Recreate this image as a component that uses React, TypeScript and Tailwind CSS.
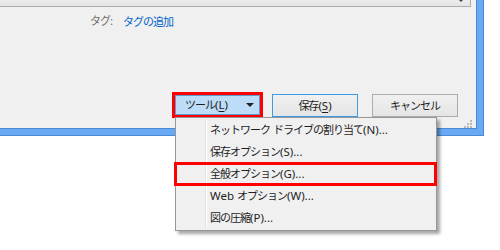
import type { ReactNode } from 'react';

const FONT = "font-['Noto_Sans_CJK_JP','Noto_Sans',sans-serif] text-[11px] tracking-[-1px]";

// menu items under the ツール button
const MENU_ITEMS = [
  'ネットワーク ドライブの割り当て(N)...',
  '保存オプション(S)...',
  '全般オプション(G)...',
  'Web オプション(W)...',
  '図の圧縮(P)...',
];

// CJK glyphs run narrow (Meiryo UI-ish); latin runs keep normal spacing
function Txt({ text }: { text: string }) {
  return (
    <>
      {text.split(/([\x20-\x7e]+)/).map((part, i) =>
        /^[\x20-\x7e]+$/.test(part) ? <Latin key={i}>{part}</Latin> : part,
      )}
    </>
  );
}

function Latin({ children }: { children: ReactNode }) {
  return <span className="font-['Noto_Sans',sans-serif] text-[11.5px] tracking-normal">{children}</span>;
}

function Btn({ children, blue }: { children: ReactNode; blue?: boolean }) {
  return (
    <div
      className={`mt-[2px] flex h-[23px] w-[86px] items-center justify-center border bg-gradient-to-b from-[#f0f0f0] to-[#e5e5e5] text-[#1e1e1e] ${
        blue ? 'border-[#3c9be8]' : 'border-[#acacac]'
      }`}
    >
      {children}
    </div>
  );
}

function Gripper() {
  return (
    <svg width="8" height="8" viewBox="0 0 8 8">
      {[
        [6, 0],
        [3, 3],
        [6, 3],
        [0, 6],
        [3, 6],
        [6, 6],
      ].map(([x, y]) => (
        <rect key={`${x}-${y}`} x={x} y={y} width="2" height="2" fill="#b8b8b8" />
      ))}
    </svg>
  );
}

export default function App() {
  return (
    <div className={`relative h-[250px] w-[500px] overflow-hidden bg-white ${FONT}`}>
      {/* ── Window frame (blue border right/bottom) ───────────────────── */}
      <div className="w-[484px] bg-[#4a8ad4] pb-px pr-px">
        <div className="bg-[#69a9f4] pb-[6px] pr-[6px]">
          <div className="flex h-[129px] flex-col border-b border-r border-[#4a8ad4] bg-[#f0f0f0]">
            {/* combobox edge at top */}
            <div className="relative h-[10px] w-[471px] border-b border-r border-[#adadad] bg-gradient-to-b from-[#ececec] to-[#e4e4e4]">
              <span className="absolute right-[7px] top-0 h-0 w-0 border-x-[2px] border-t-[2px] border-x-transparent border-t-[#444]" />
            </div>

            {/* tags row */}
            <div className="mt-[8px] flex h-[16px] items-center pl-[90px] leading-none">
              <span className="text-[#6d6d6d]">
                タグ<Latin>:</Latin>
              </span>
              <span className="ml-[10px] text-[#0066cc]">タグの追加</span>
            </div>

            {/* buttons row */}
            <div className="mt-[65px] flex items-start pl-[172px]">
              <div className="h-[26px] w-[91px] border-[3px] border-[#ff0000]">
                <div className="flex h-full items-center border border-[#5c9bd8] bg-[#bcdcf7] pl-[9px] pr-[5px] text-[#1e1e1e]">
                  <span>
                    ツール<Latin>
                      (<span className="underline underline-offset-2">L</span>)
                    </Latin>
                  </span>
                  <span className="ml-auto h-0 w-0 border-x-[4px] border-t-[4px] border-x-transparent border-t-[#222]" />
                </div>
              </div>
              <div className="ml-[9px]">
                <Btn blue>
                  保存<Latin>
                    (<span className="underline underline-offset-2">S</span>)
                  </Latin>
                </Btn>
              </div>
              <div className="ml-[14px]">
                <Btn>キャンセル</Btn>
              </div>
            </div>

            <div className="mt-[2px] flex justify-end pr-[4px]">
              <Gripper />
            </div>
          </div>
        </div>
      </div>

      {/* ── Dropdown menu ─────────────────────────────────────────────── */}
      <div className="absolute left-[175px] top-[117px] w-[262px] border border-[#979797] bg-[#f0f0f0] py-px shadow-[3px_3px_3px_rgba(0,0,0,0.35)]">
        <div className="absolute bottom-[2px] left-[29px] top-[2px] w-px bg-[#e2e2e2]" />
        <div className="absolute bottom-[2px] left-[30px] top-[2px] w-px bg-white" />
        {MENU_ITEMS.map((label) => (
          <div key={label} className="relative flex h-[22px] items-center pl-[34px] text-[#1e1e1e]">
            <span>
              <Txt text={label} />
            </span>
          </div>
        ))}
      </div>

      {/* red highlight around 全般オプション */}
      <div className="absolute left-[174px] top-[162px] h-[24px] w-[263px] border-[3px] border-[#ff0000]" />
    </div>
  );
}
